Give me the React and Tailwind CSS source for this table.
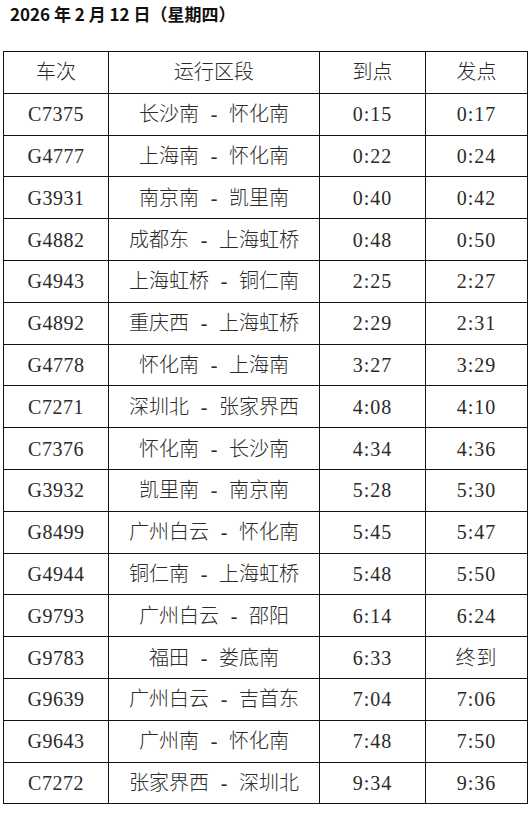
import React from "react";

const rows = [
  ["C7375", "长沙南", "怀化南", "0:15", "0:17"],
  ["G4777", "上海南", "怀化南", "0:22", "0:24"],
  ["G3931", "南京南", "凯里南", "0:40", "0:42"],
  ["G4882", "成都东", "上海虹桥", "0:48", "0:50"],
  ["G4943", "上海虹桥", "铜仁南", "2:25", "2:27"],
  ["G4892", "重庆西", "上海虹桥", "2:29", "2:31"],
  ["G4778", "怀化南", "上海南", "3:27", "3:29"],
  ["C7271", "深圳北", "张家界西", "4:08", "4:10"],
  ["C7376", "怀化南", "长沙南", "4:34", "4:36"],
  ["G3932", "凯里南", "南京南", "5:28", "5:30"],
  ["G8499", "广州白云", "怀化南", "5:45", "5:47"],
  ["G4944", "铜仁南", "上海虹桥", "5:48", "5:50"],
  ["G9793", "广州白云", "邵阳", "6:14", "6:24"],
  ["G9783", "福田", "娄底南", "6:33", "终到"],
  ["G9639", "广州白云", "吉首东", "7:04", "7:06"],
  ["G9643", "广州南", "怀化南", "7:48", "7:50"],
  ["C7272", "张家界西", "深圳北", "9:34", "9:36"],
];

const cell =
  "border-[1.5px] border-[#111] text-center align-middle p-0 h-[41.8px] text-[20px] leading-none text-[#2a2a2a] font-light";

export default function App() {
  return (
    <div
      className="w-[532px] h-[827px] bg-white overflow-hidden"
      style={{ fontFamily: '"Liberation Serif", "Noto Sans CJK SC", serif' }}
    >
      <div
        className="pl-[10px] pt-[3px] h-[51px] text-[17px] font-bold text-[#111] leading-[22px]"
        style={{ fontFamily: '"Noto Sans CJK SC", "Noto Sans", sans-serif' }}
      >
        2026 年 2 月 12 日（星期四）
      </div>
      <table className="ml-[3px] w-[524px] border-collapse table-fixed">
        <colgroup>
          <col className="w-[105px]" />
          <col className="w-[211px]" />
          <col className="w-[106px]" />
          <col className="w-[102px]" />
        </colgroup>
        <thead>
          <tr>
            {["车次", "运行区段", "到点", "发点"].map((h) => (
              <th key={h} className={cell}>
                {h}
              </th>
            ))}
          </tr>
        </thead>
        <tbody>
          {rows.map((r) => (
            <tr key={r[0]}>
              <td className={cell + " tracking-[0.5px]"}>{r[0]}</td>
              <td className={cell}>
                {r[1]}
                <span className="inline-block w-[30px] text-center">-</span>
                {r[2]}
              </td>
              <td className={cell + " tracking-[1px]"}>{r[3]}</td>
              <td className={cell + " tracking-[1px]"}>{r[4]}</td>
            </tr>
          ))}
        </tbody>
      </table>
    </div>
  );
}
